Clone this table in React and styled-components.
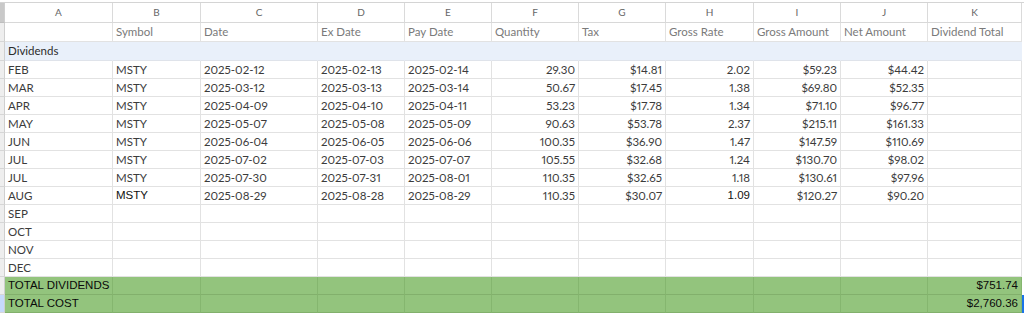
import React from 'react';
import styled, { createGlobalStyle, css } from 'styled-components';

const GlobalStyle = createGlobalStyle`
    html, body {
        margin: 0;
        padding: 0;
        background: #ffffff;
    }
`;

const COLS = ['A', 'B', 'C', 'D', 'E', 'F', 'G', 'H', 'I', 'J', 'K'];
const WIDTHS = [108, 88, 117, 87, 87, 87, 87, 88, 87, 87, 94];

const rows = [
    ['FEB', 'MSTY', '2025-02-12', '2025-02-13', '2025-02-14', '29.30', '$14.81', '2.02', '$59.23', '$44.42'],
    ['MAR', 'MSTY', '2025-03-12', '2025-03-13', '2025-03-14', '50.67', '$17.45', '1.38', '$69.80', '$52.35'],
    ['APR', 'MSTY', '2025-04-09', '2025-04-10', '2025-04-11', '53.23', '$17.78', '1.34', '$71.10', '$96.77'],
    ['MAY', 'MSTY', '2025-05-07', '2025-05-08', '2025-05-09', '90.63', '$53.78', '2.37', '$215.11', '$161.33'],
    ['JUN', 'MSTY', '2025-06-04', '2025-06-05', '2025-06-06', '100.35', '$36.90', '1.47', '$147.59', '$110.69'],
    ['JUL', 'MSTY', '2025-07-02', '2025-07-03', '2025-07-07', '105.55', '$32.68', '1.24', '$130.70', '$98.02'],
    ['JUL', 'MSTY', '2025-07-30', '2025-07-31', '2025-08-01', '110.35', '$32.65', '1.18', '$130.61', '$97.96'],
    ['AUG', 'MSTY', '2025-08-29', '2025-08-28', '2025-08-29', '110.35', '$30.07', '1.09', '$120.27', '$90.20'],
];

// columns that hold numbers are right aligned
const RIGHT = [false, false, false, false, false, true, true, true, true, true, true];

const Sheet = styled.div`
    margin-top: 2px;
    border-top: 1px solid #d4d4d4;
    display: grid;
    grid-template-columns: 5px ${WIDTHS.map(w => w + 'px').join(' ')} 1fr;
    font-family: Lato, 'Liberation Sans', sans-serif;
    font-size: 11.5px;
    font-variant-numeric: proportional-nums;
    color: #3b3b3b;
`;

const RowHead = styled.div`
    box-sizing: border-box;
    height: ${p => p.$h}px;
    background: ${p => (p.$top ? '#c9c9c9' : p.$sel ? '#c6dafc' : '#eeeeee')};
    border-bottom: 1px solid ${p => (p.$top ? '#bdbdbd' : '#d6d6d6')};
    border-right: 1px solid #cfcfcf;
`;

const Cell = styled.div`
    box-sizing: border-box;
    height: ${p => p.$h}px;
    padding: 0 3px 1px;
    display: flex;
    align-items: center;
    justify-content: ${p => (p.$right ? 'flex-end' : 'flex-start')};
    white-space: nowrap;
    overflow: hidden;
    border-right: 1px solid #e2e2e2;
    border-bottom: 1px solid #e2e2e2;
    background: #ffffff;
    ${p => p.$strong && css`
        font-family: 'Liberation Sans', Arial, sans-serif;
        color: #111111;
        font-size: 11.5px;
    `}
`;

const LetterCell = styled(Cell)`
    justify-content: center;
    color: #666666;
    font-size: 10px;
    border-right-color: #dadada;
    border-bottom-color: #d8d8d8;
`;

const LabelCell = styled(Cell)`
    color: #7a7a7a;
`;

const SectionCell = styled(Cell)`
    background: #e9f0fa;
    border-right-color: #e9f0fa;
    border-bottom-color: #dfe3ea;
    color: #2c2c2c;
`;

const TotalCell = styled(Cell)`
    background: #93c47d;
    border-right-color: #85b66f;
    border-bottom-color: #82b06c;
    font-family: 'Liberation Sans', Arial, sans-serif;
    font-size: 11.5px;
    color: #0a0a0a;
`;

const Edge = styled.div`
    height: ${p => p.$h}px;
    box-sizing: border-box;
    background: ${p => (p.$sel ? '#1a73e8' : '#ffffff')};
    width: ${p => (p.$sel ? '2px' : 'auto')};
`;

const labels = ['', 'Symbol', 'Date', 'Ex Date', 'Pay Date', 'Quantity', 'Tax', 'Gross Rate', 'Gross Amount', 'Net Amount', 'Dividend Total'];
const empties = ['SEP', 'OCT', 'NOV', 'DEC'];
const totals = [
    ['TOTAL DIVIDENDS', '$751.74'],
    ['TOTAL COST', '$2,760.36'],
];

export default function App() {
    return (
        <>
            <GlobalStyle />
            <Sheet>
                <RowHead $h={20} $top />
                {COLS.map(c => (
                    <LetterCell key={c} $h={20}>{c}</LetterCell>
                ))}
                <Edge $h={20} />

                <RowHead $h={19} />
                {labels.map((l, i) => (
                    <LabelCell key={i} $h={19}>{l}</LabelCell>
                ))}
                <Edge $h={19} />

                <RowHead $h={19} />
                {COLS.map((c, i) => (
                    <SectionCell key={c} $h={19}>{i === 0 ? 'Dividends' : ''}</SectionCell>
                ))}
                <Edge $h={19} />

                {rows.map((r, ri) => (
                    <React.Fragment key={ri}>
                        <RowHead $h={18} />
                        {COLS.map((c, i) => (
                            <Cell
                                key={c}
                                $h={18}
                                $right={RIGHT[i]}
                                $strong={ri === 7 && (i === 1 || i === 7)}
                            >
                                {r[i] || ''}
                            </Cell>
                        ))}
                        <Edge $h={18} />
                    </React.Fragment>
                ))}

                {empties.map(m => (
                    <React.Fragment key={m}>
                        <RowHead $h={18} />
                        {COLS.map((c, i) => (
                            <Cell key={c} $h={18}>{i === 0 ? m : ''}</Cell>
                        ))}
                        <Edge $h={18} />
                    </React.Fragment>
                ))}

                {totals.map(([name, value], ti) => (
                    <React.Fragment key={name}>
                        <RowHead $h={18} $sel={ti === 1} />
                        {COLS.map((c, i) => (
                            <TotalCell key={c} $h={18} $right={i === 10}>
                                {i === 0 ? name : i === 10 ? value : ''}
                            </TotalCell>
                        ))}
                        <Edge $h={18} $sel={ti === 1} />
                    </React.Fragment>
                ))}
            </Sheet>
        </>
    );
}
